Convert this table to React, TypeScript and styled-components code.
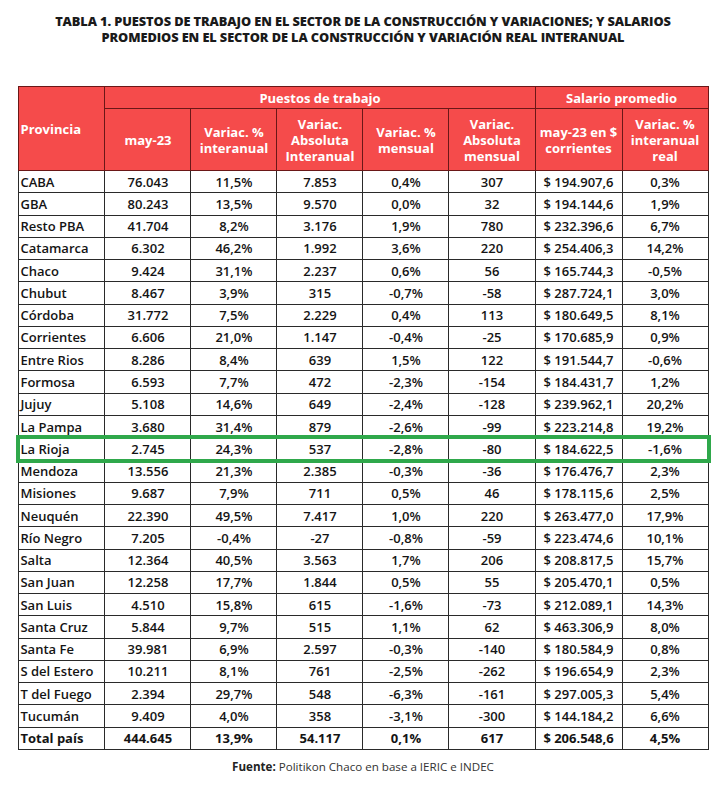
import React from "react";
import styled, { createGlobalStyle } from "styled-components";

const Global = createGlobalStyle`
  html, body { margin: 0; padding: 0; background: #fff; }
  body { font-family: "Open Sans", "Liberation Sans", sans-serif; color: #111; }
`;

const Page = styled.div`
  width: 726px;
  height: 788px;
  display: flex;
  flex-direction: column;
  align-items: center;
  box-sizing: border-box;
  padding-top: 13px;
`;

const Title = styled.h1`
  margin: 0;
  display: flex;
  flex-direction: column;
  align-items: center;
  gap: 0;
  font-size: 12.8px;
  line-height: 16px;
  font-weight: 800;
  text-align: center;
  color: #1a1a1a;
  letter-spacing: -0.1px;
  width: 690px;
`;

const TitleLine = styled.span`
  display: block;
  white-space: nowrap;
`;

const Table = styled.table`
  margin-top: 41px;
  margin-left: 1px;
  border-collapse: collapse;
  table-layout: fixed;
  width: 689px;
  font-size: 13px;
  border: 1.5px solid #2a2a2a;
`;

const Th = styled.th<{ $align?: string; $h?: number }>`
  background: #f54b4b;
  color: #fff;
  font-weight: 700;
  font-size: 13px;
  line-height: 16px;
  border: 1px solid #6a1717;
  text-align: ${(p) => p.$align || "center"};
  padding: 0 ${(p) => (p.$align === "left" ? "1px" : "3px")};
  height: ${(p) => (p.$h ? `${p.$h}px` : "auto")};
  vertical-align: middle;
`;

const Row = styled.tr<{ $highlight?: boolean; $total?: boolean }>`
  height: 22.27px;
  font-weight: ${(p) => (p.$total ? 700 : 600)};
  outline: ${(p) => (p.$highlight ? "4px solid #2fa84b" : "none")};
  outline-offset: -1px;
`;

const Td = styled.td<{ $left?: boolean }>`
  border: 1px solid #2a2a2a;
  padding: 0 ${(p) => (p.$left ? "1px" : "2px")};
  text-align: ${(p) => (p.$left ? "left" : "center")};
  white-space: nowrap;
  color: #141414;
`;

const Footer = styled.p`
  margin: 9px 0 0;
  font-size: 11.6px;
  color: #333;
  b { font-weight: 700; color: #222; }
`;

const rows: string[][] = [
  ["CABA", "76.043", "11,5%", "7.853", "0,4%", "307", "$ 194.907,6", "0,3%"],
  ["GBA", "80.243", "13,5%", "9.570", "0,0%", "32", "$ 194.144,6", "1,9%"],
  ["Resto PBA", "41.704", "8,2%", "3.176", "1,9%", "780", "$ 232.396,6", "6,7%"],
  ["Catamarca", "6.302", "46,2%", "1.992", "3,6%", "220", "$ 254.406,3", "14,2%"],
  ["Chaco", "9.424", "31,1%", "2.237", "0,6%", "56", "$ 165.744,3", "-0,5%"],
  ["Chubut", "8.467", "3,9%", "315", "-0,7%", "-58", "$ 287.724,1", "3,0%"],
  ["Córdoba", "31.772", "7,5%", "2.229", "0,4%", "113", "$ 180.649,5", "8,1%"],
  ["Corrientes", "6.606", "21,0%", "1.147", "-0,4%", "-25", "$ 170.685,9", "0,9%"],
  ["Entre Rios", "8.286", "8,4%", "639", "1,5%", "122", "$ 191.544,7", "-0,6%"],
  ["Formosa", "6.593", "7,7%", "472", "-2,3%", "-154", "$ 184.431,7", "1,2%"],
  ["Jujuy", "5.108", "14,6%", "649", "-2,4%", "-128", "$ 239.962,1", "20,2%"],
  ["La Pampa", "3.680", "31,4%", "879", "-2,6%", "-99", "$ 223.214,8", "19,2%"],
  ["La Rioja", "2.745", "24,3%", "537", "-2,8%", "-80", "$ 184.622,5", "-1,6%"],
  ["Mendoza", "13.556", "21,3%", "2.385", "-0,3%", "-36", "$ 176.476,7", "2,3%"],
  ["Misiones", "9.687", "7,9%", "711", "0,5%", "46", "$ 178.115,6", "2,5%"],
  ["Neuquén", "22.390", "49,5%", "7.417", "1,0%", "220", "$ 263.477,0", "17,9%"],
  ["Río Negro", "7.205", "-0,4%", "-27", "-0,8%", "-59", "$ 223.474,6", "10,1%"],
  ["Salta", "12.364", "40,5%", "3.563", "1,7%", "206", "$ 208.817,5", "15,7%"],
  ["San Juan", "12.258", "17,7%", "1.844", "0,5%", "55", "$ 205.470,1", "0,5%"],
  ["San Luis", "4.510", "15,8%", "615", "-1,6%", "-73", "$ 212.089,1", "14,3%"],
  ["Santa Cruz", "5.844", "9,7%", "515", "1,1%", "62", "$ 463.306,9", "8,0%"],
  ["Santa Fe", "39.981", "6,9%", "2.597", "-0,3%", "-140", "$ 180.584,9", "0,8%"],
  ["S del Estero", "10.211", "8,1%", "761", "-2,5%", "-262", "$ 196.654,9", "2,3%"],
  ["T del Fuego", "2.394", "29,7%", "548", "-6,3%", "-161", "$ 297.005,3", "5,4%"],
  ["Tucumán", "9.409", "4,0%", "358", "-3,1%", "-300", "$ 144.184,2", "6,6%"],
];

const total = ["Total país", "444.645", "13,9%", "54.117", "0,1%", "617", "$ 206.548,6", "4,5%"];

export default function App() {
  return (
    <>
      <Global />
      <Page>
        <Title>
          <TitleLine>
            TABLA 1. PUESTOS DE TRABAJO EN EL SECTOR DE LA CONSTRUCCIÓN Y VARIACIONES; Y SALARIOS
          </TitleLine>
          <TitleLine>
            PROMEDIOS EN EL SECTOR DE LA CONSTRUCCIÓN Y VARIACIÓN REAL INTERANUAL
          </TitleLine>
        </Title>
        <Table>
          <colgroup>
            <col style={{ width: 86 }} />
            <col style={{ width: 86 }} />
            <col style={{ width: 86 }} />
            <col style={{ width: 86 }} />
            <col style={{ width: 86 }} />
            <col style={{ width: 86 }} />
            <col style={{ width: 87 }} />
            <col style={{ width: 86 }} />
          </colgroup>
          <thead>
            <tr>
              <Th rowSpan={2} $align="left">Provincia</Th>
              <Th colSpan={5} $h={21}>Puestos de trabajo</Th>
              <Th colSpan={2}>Salario promedio</Th>
            </tr>
            <tr>
              <Th $h={61}>may-23</Th>
              <Th>Variac. % interanual</Th>
              <Th>Variac. Absoluta Interanual</Th>
              <Th>Variac. % mensual</Th>
              <Th>Variac. Absoluta mensual</Th>
              <Th>may-23 en $ corrientes</Th>
              <Th>Variac. % interanual real</Th>
            </tr>
          </thead>
          <tbody>
            {rows.map((r) => (
              <Row key={r[0]} $highlight={r[0] === "La Rioja"}>
                {r.map((c, i) => (
                  <Td key={i} $left={i === 0}>{c}</Td>
                ))}
              </Row>
            ))}
            <Row $total>
              {total.map((c, i) => (
                <Td key={i} $left={i === 0}>{c}</Td>
              ))}
            </Row>
          </tbody>
        </Table>
        <Footer>
          <b>Fuente:</b> Politikon Chaco en base a IERIC e INDEC
        </Footer>
      </Page>
    </>
  );
}
